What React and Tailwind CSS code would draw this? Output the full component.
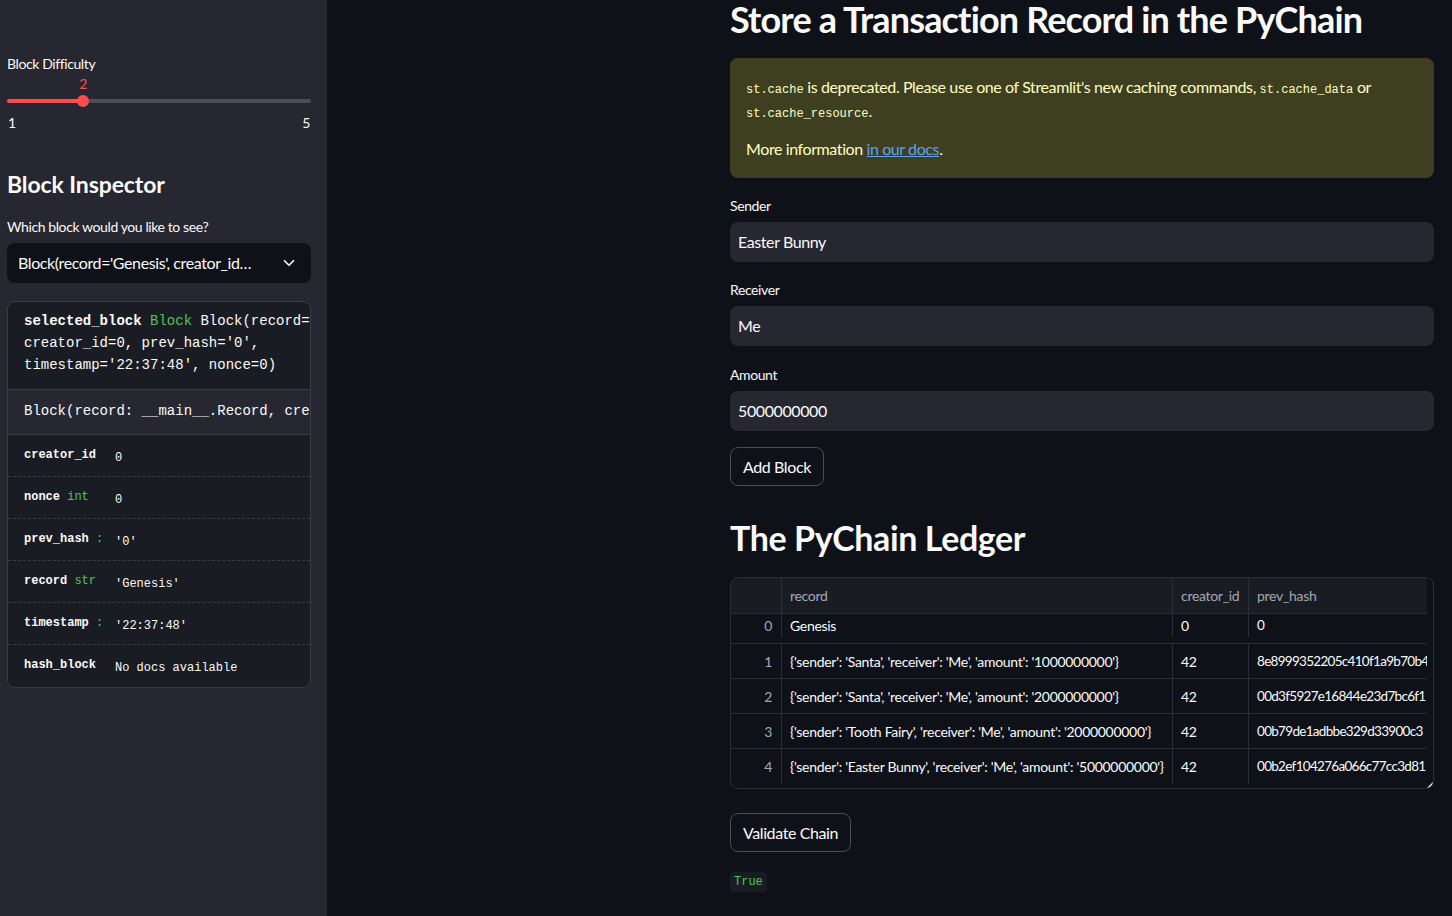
import { ChevronDown } from "lucide-react";

const sans = { fontFamily: "Lato, 'Noto Sans', sans-serif" };
const mono = { fontFamily: "'Liberation Mono', 'DejaVu Sans Mono', monospace" };

const attrs = [
  { name: "creator_id", type: null, value: "0" },
  { name: "nonce", type: "int", value: "0" },
  { name: "prev_hash", type: ":", value: "'0'" },
  { name: "record", type: "str", value: "'Genesis'" },
  { name: "timestamp", type: ":", value: "'22:37:48'" },
  { name: "hash_block", type: null, value: "No docs available" },
];

const ledger = [
  ["Genesis", "0", "0"],
  ["{'sender': 'Santa', 'receiver': 'Me', 'amount': '1000000000'}", "42", "8e8999352205c410f1a9b70b4"],
  ["{'sender': 'Santa', 'receiver': 'Me', 'amount': '2000000000'}", "42", "00d3f5927e16844e23d7bc6f1"],
  ["{'sender': 'Tooth Fairy', 'receiver': 'Me', 'amount': '2000000000'}", "42", "00b79de1adbbe329d33900c3"],
  ["{'sender': 'Easter Bunny', 'receiver': 'Me', 'amount': '5000000000'}", "42", "00b2ef104276a066c77cc3d81"],
];

function Sidebar() {
  return (
    <aside className="w-[327px] shrink-0 bg-[#262730] pl-[7px] pt-[54px] tracking-[-0.4px] text-[#fafafa]">
      <div className="w-[304px]">
        <div className="h-5 text-[14px] leading-5">Block Difficulty</div>
        <div className="relative h-5">
          <span className="absolute left-[76px] -translate-x-1/2 text-[14px] leading-5 text-[#ff4b4b]">2</span>
        </div>
        <div className="relative flex h-[14px] items-center">
          <div className="flex h-1 w-full overflow-hidden rounded-full">
            <div className="w-[76px] bg-[#ff4b4b]" />
            <div className="flex-1 bg-[#4b4d57]" />
          </div>
          <div className="absolute left-[70px] top-[1px] h-3 w-3 rounded-full bg-[#ff4b4b]" />
        </div>
        <div className="mt-[5px] flex h-5 justify-between text-[14px] leading-5">
          <span className="pl-[1px]">1</span>
          <span className="pr-[1px]">5</span>
        </div>

        <h2 className="mt-[33px] h-9 text-[23px] font-bold leading-9 tracking-[-0.1px]">Block Inspector</h2>
        <div className="mt-[15px] h-5 text-[14px] leading-5">Which block would you like to see?</div>
        <div className="mt-[6px] flex h-10 items-center justify-between rounded-lg bg-[#0e1117] pl-[11px] pr-[13px]">
          <span className="truncate text-[16px]">Block(record='Genesis', creator_id…</span>
          <ChevronDown size={18} strokeWidth={2.2} className="ml-2 shrink-0" />
        </div>

        <div className="mt-[18px] overflow-hidden rounded-lg border border-[#3a3b45] bg-[#1a1c23] tracking-normal" style={mono}>
          <div className="whitespace-nowrap border-b border-[#3a3b45] pb-[13px] pl-4 pt-[8px] text-[14px] leading-[22px]">
            <div>
              <span className="font-bold">selected_block</span> <span className="text-[#4fc45a]">Block</span> Block(record='Genesis',
            </div>
            <div>creator_id=0, prev_hash='0',</div>
            <div>timestamp='22:37:48', nonce=0)</div>
          </div>
          <div className="h-[45px] whitespace-nowrap border-b border-[#3a3b45] bg-[#262730] pl-4 pt-[10px] text-[14px] leading-[22px]">
            Block(record: __main__.Record, creator_id: int, prev_hash: str)
          </div>
          {attrs.map((a, i) => (
            <div
              key={a.name}
              className={`flex h-[42px] pl-4 text-[12px] ${i < attrs.length - 1 ? "border-b border-dashed border-[#3a3b45]" : ""}`}
            >
              <div className="w-[91px] shrink-0 pt-[12px] leading-4">
                <span className="font-bold">{a.name}</span>
                {a.type && <span className="text-[#4fc45a]"> {a.type}</span>}
              </div>
              <div className="pt-[15px] leading-4">{a.value}</div>
            </div>
          ))}
        </div>
      </div>
    </aside>
  );
}

function Field({ label, value, mt }) {
  return (
    <div className={mt}>
      <div className="h-5 text-[14px] leading-5">{label}</div>
      <div className="mt-[6px] flex h-10 items-center rounded-lg bg-[#262730] px-2 text-[16px]">{value}</div>
    </div>
  );
}

function Ledger() {
  return (
    <div className="relative mt-[15px] h-[212px] overflow-hidden rounded-lg border border-[#2b2d36] pr-[6px] text-[14px] tracking-[-0.3px]">
      <div className="flex h-9 border-b border-[#2b2d36] bg-[#1a1c24] text-[#a3a8b8]">
        <div className="w-[51px] border-r border-[#2b2d36]" />
        <div className="flex w-[391px] items-center border-r border-[#2b2d36] pl-2">record</div>
        <div className="flex w-[76px] items-center border-r border-[#2b2d36] pl-2">creator_id</div>
        <div className="flex flex-1 items-center pl-2">prev_hash</div>
      </div>
      {ledger.map((r, i) => (
        <div
          key={i}
          className={`flex ${i === 0 ? "h-[30px] pb-[6px]" : "h-[35px]"} ${i < ledger.length - 1 ? "border-b border-[#2b2d36]" : ""}`}
        >
          <div className="flex w-[51px] items-center justify-end border-r border-[#2b2d36] pr-[9px] text-[#a3a8b8]">{i}</div>
          <div className="flex w-[391px] items-center whitespace-nowrap border-r border-[#2b2d36] pl-2">{r[0]}</div>
          <div className="flex w-[76px] items-center border-r border-[#2b2d36] pl-2">{r[1]}</div>
          <div className="flex flex-1 items-center overflow-hidden whitespace-nowrap pl-2 text-[13.5px] tracking-[-0.7px]">{r[2]}</div>
        </div>
      ))}
      <div className="absolute bottom-0 right-0 h-0 w-0 border-b-[6px] border-l-[6px] border-b-white border-l-transparent" />
    </div>
  );
}

export default function App() {
  return (
    <div className="flex h-[916px] w-[1452px] overflow-hidden bg-[#0e1117] text-[#fafafa]" style={sans}>
      <Sidebar />
      <main className="pl-[403px] tracking-[-0.4px]">
        <div className="w-[704px]">
          <h1 className="h-[42px] whitespace-nowrap text-[36px] font-bold leading-[38px] tracking-[-0.85px]">
            Store a Transaction Record in the PyChain
          </h1>
          <div className="mt-4 rounded-lg bg-[#3e3e20] px-4 pb-[17px] pt-[17px] text-[16px] leading-6 text-[#ffffc2]">
            <p>
              <code className="text-[12px] leading-none tracking-normal" style={mono}>st.cache</code> is deprecated. Please use one of Streamlit's new caching commands,{" "}
              <code className="text-[12px] leading-none tracking-normal" style={mono}>st.cache_data</code> or{" "}
              <code className="text-[12px] leading-none tracking-normal" style={mono}>st.cache_resource</code>.
            </p>
            <p className="mt-[14px]">
              More information <span className="text-[#5fa4ef] underline">in our docs</span>.
            </p>
          </div>

          <Field label="Sender" value="Easter Bunny" mt="mt-[18px]" />
          <Field label="Receiver" value="Me" mt="mt-[18px]" />
          <Field label="Amount" value="5000000000" mt="mt-[19px]" />

          <button className="mt-4 h-[39px] rounded-lg border border-[#4a4b53] px-3 text-[16px]">Add Block</button>

          <h2 className="mt-[32px] h-11 text-[34px] font-bold leading-[40px]">The PyChain Ledger</h2>
          <Ledger />

          <button className="mt-6 h-[39px] rounded-lg border border-[#4a4b53] px-3 text-[16px]">Validate Chain</button>
          <div className="mt-[20px] flex">
            <code
              className="h-5 rounded bg-[#1a1c23] px-1 text-[12px] leading-5 tracking-normal text-[#4fc45a]"
              style={mono}
            >
              True
            </code>
          </div>
        </div>
      </main>
    </div>
  );
}
